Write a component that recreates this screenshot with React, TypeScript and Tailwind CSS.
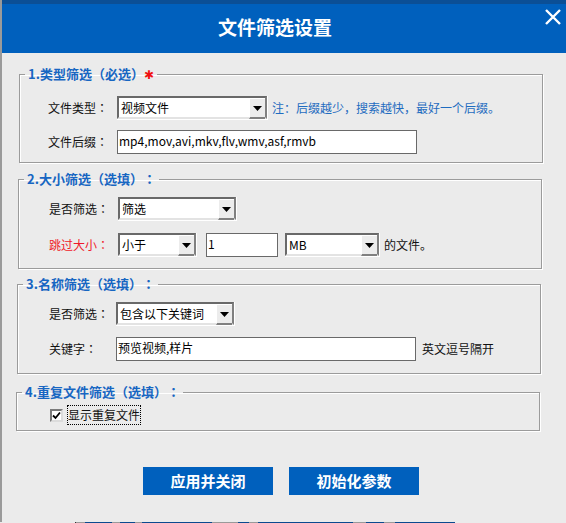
const F = "[font-family:'Noto_Sans_CJK_SC','Liberation_Sans',sans-serif] [text-spacing-trim:space-all]";

const STRIP: [number, string][] = [
  [75, "#ebebeb"], [1, "#333333"], [9, "#9a9a9a"], [27, "#0b4a8f"], [8, "#9a9a9a"], [15, "#0b4a8f"], [7, "#9a9a9a"], [70, "#0b4a8f"], [26, "#9a9a9a"],
  [11, "#0b4a8f"], [9, "#9a9a9a"], [95, "#0b4a8f"], [13, "#9a9a9a"], [18, "#0b4a8f"], [11, "#9a9a9a"], [60, "#0b4a8f"], [111, "#ebebeb"],
];

function Colon() {
  return <span className="[font-family:'Noto_Sans_CJK_TC',sans-serif]">：</span>;
}

function Combo({ w, text, className = "" }: { w: string; text: string; className?: string }) {
  return (
    <div className={`${w} ${className} h-6 shrink-0 border-r border-b border-white`}>
      <div className="flex h-full items-stretch border-2 border-t-[#696969] border-l-[#696969] border-r-[#808080] border-b-[#e3e3e3] bg-white">
        <span className="flex-1 pl-[2px] text-xs leading-[20px] text-black">{text}</span>
        <span className="mb-[-2px] flex w-[16px] items-center justify-center border-t border-b-2 border-l border-t-white border-l-white border-b-[#808080] bg-[#ececec]">
          <svg width="9" height="5" viewBox="0 0 9 5"><path d="M0 0h9L4.5 5z" fill="#000" /></svg>
        </span>
      </div>
    </div>
  );
}

function Field({ w, value }: { w: string; value: string }) {
  return (
    <div className={`${w} h-6 shrink-0 border border-[#696969] bg-white pl-[1px] text-xs leading-[20px] text-black`}>
      {value}
    </div>
  );
}

function Label({ children, red, w = "w-[69px]" }: { children: string; red?: boolean; w?: string }) {
  return (
    <span className={`${w} shrink-0 text-xs ${red ? "text-[#f01a2a]" : "text-[#111]"}`}>
      {children}
      <Colon />
    </span>
  );
}

function Group({ title, star, colon, className, children }: { title: string; star?: boolean; colon?: boolean; className: string; children: React.ReactNode }) {
  return (
    <fieldset className={`${className} border border-[#9b9b9b] shadow-[1px_1px_0_#fff,inset_1px_1px_0_#fff]`}>
      <legend className="ml-[5px] px-[3px] text-[13px] leading-[16px] font-bold text-[#1766c2]">
        {title}
        {colon && <Colon />}
        {star && <span className="[font-family:'DejaVu_Sans',sans-serif] text-xs font-normal text-[#f01010]">✱</span>}
      </legend>
      {children}
    </fieldset>
  );
}

export default function App() {
  return (
    <div className={`${F} flex h-[523px] w-[566px] flex-col overflow-hidden bg-[#ebebeb]`}>
      <div className="flex h-[522px] flex-col border-l-2 border-[#9a9a9a]">
        <header className="relative flex h-[53px] shrink-0 items-center justify-center border-t-4 border-[#0b4f96] bg-[#0060bd] pr-[18px] pb-[2px]">
          <h1 className="text-[19px] font-bold text-white">文件筛选设置</h1>
          <svg className="absolute top-[5px] right-[5px]" width="16" height="16" viewBox="0 0 16 16">
            <path d="M1 1l14 14M15 1L1 15" stroke="#fff" strokeWidth="2.4" />
          </svg>
        </header>

        <div className="flex flex-1 flex-col">
          <Group title="1.类型筛选（必选）" star className="mt-[13px] ml-[17px] h-[97px] w-[524px]">
            <div className="mt-[13px] ml-[28px] flex items-center">
              <Label>文件类型</Label>
              <Combo w="w-[151px]" text="视频文件" />
              <span className="ml-[4px] text-xs text-[#1f6cc0]">注：后缀越少，搜索越快，最好一个后缀。</span>
            </div>
            <div className="mt-[10px] ml-[28px] flex items-center">
              <Label>文件后缀</Label>
              <Field w="w-[300px]" value="mp4,mov,avi,mkv,flv,wmv,asf,rmvb" />
            </div>
          </Group>

          <Group title="2.大小筛选（选填）" colon className="mt-[8px] ml-[16px] h-[98px] w-[524px]">
            <div className="mt-[10px] ml-[30px] flex items-center">
              <Label>是否筛选</Label>
              <Combo w="w-[119px]" text="筛选" />
            </div>
            <div className="mt-[12px] ml-[30px] flex items-center">
              <Label red>跳过大小</Label>
              <Combo w="w-[79px]" text="小于" />
              <div className="ml-[9px]"><Field w="w-[72px]" value="1" /></div>
              <Combo w="w-[95px]" text="MB" className="ml-[7px]" />
              <span className="ml-[4px] text-xs text-[#111]">的文件。</span>
            </div>
          </Group>

          <Group title="3.名称筛选（选填）" colon className="mt-[7px] ml-[15px] h-[98px] w-[524px]">
            <div className="mt-[10px] ml-[31px] flex items-center">
              <Label w="w-[67px]">是否筛选</Label>
              <Combo w="w-[119px]" text="包含以下关键词" />
            </div>
            <div className="mt-[11px] ml-[31px] flex items-center">
              <Label w="w-[67px]">关键字</Label>
              <Field w="w-[300px]" value="预览视频,样片" />
              <span className="ml-[6px] text-xs text-[#111]">英文逗号隔开</span>
            </div>
          </Group>

          <Group title="4.重复文件筛选（选填）" colon className="mt-[10px] ml-[14px] h-[47px] w-[524px]">
            <div className="mt-[5px] ml-[33px] flex items-center">
              <span className="flex h-[13px] w-[13px] items-center justify-center border-2 border-t-[#7a7a7a] border-l-[#7a7a7a] border-r-[#dcdcdc] border-b-[#dcdcdc] bg-white">
                <svg width="9" height="9" viewBox="0 0 9 9"><path d="M1 4.5l2.5 2.5L8 1.5" fill="none" stroke="#000" strokeWidth="1.8" /></svg>
              </span>
              <span className="ml-[4px] border border-dotted border-black text-xs leading-[18px] text-[#111]">显示重复文件</span>
            </div>
          </Group>

          <div className="mt-[36px] ml-[141px] flex gap-[16px]">
            <button className="h-[28px] w-[130px] bg-[#0060bd] text-[15px] font-bold text-white">应用并关闭</button>
            <button className="h-[28px] w-[130px] bg-[#0060bd] text-[15px] font-bold text-white">初始化参数</button>
          </div>
        </div>
      </div>
      <div className="flex h-px">
        {STRIP.map(([width, color], i) => (
          <span key={i} style={{ width, backgroundColor: color }} />
        ))}
      </div>
    </div>
  );
}
